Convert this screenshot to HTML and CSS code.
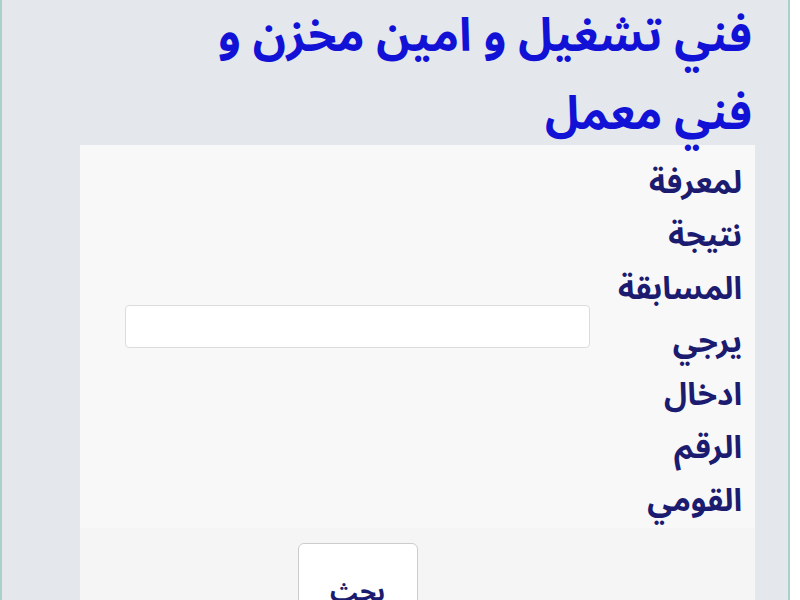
FILE: index.html
```html
<!DOCTYPE html>
<html lang="ar" dir="rtl">
<head>
<meta charset="utf-8">
<link rel="stylesheet" href="styles.css">
</head>
<body>
<div class="page">
  <h2 class="title">فني تشغيل و امين مخزن و<br>فني معمل</h2>
  <div class="panel">
    <div class="row">
      <div class="label">لمعرفة<br>نتيجة<br>المسابقة<br>يرجي<br>ادخال<br>الرقم<br>القومي</div>
      <div class="field"><input class="input" type="text"></div>
    </div>
    <div class="row row-btn">
      <div class="spacer"></div>
      <div class="field"><button class="btn">بحث</button></div>
    </div>
  </div>
</div>
</body>
</html>
```

FILE: styles.css
```css
html, body {
  margin: 0;
  padding: 0;
  background: #ffffff;
  height: 600px;
  overflow: hidden;
}
.page {
  width: 790px;
  height: 600px;
  margin: 0 10px 0 0;
  box-sizing: border-box;
  border-left: 2px solid #a9d0c9;
  border-right: 2px solid #a9d0c9;
  background: #e4e8ed;
  font-family: "Noto Sans Arabic", "DejaVu Sans", sans-serif;
  overflow: hidden;
}
.title {
  margin: 0;
  padding: 0 36px 0 0;
  color: #1212d6;
  font-size: 46px;
  font-weight: bold;
  line-height: 78px;
  margin-top: -2px;
  white-space: nowrap;
}
.panel {
  margin: -9px 33px 0 78px;
  background: #f8f8f9;
  height: 470px;
}
.row {
  display: grid;
  grid-template-columns: 120px 1fr;
}
.label {
  padding: 12px 13px 0 0;
  color: #1b1b6f;
  font-size: 31.5px;
  font-weight: bold;
  line-height: 53px;
  white-space: nowrap;
}
.field {
  display: flex;
  align-items: center;
  justify-content: center;
}
.input {
  width: 465px;
  height: 43px;
  box-sizing: border-box;
  border: 1px solid #dcdcdc;
  border-radius: 4px;
  background: #ffffff;
  margin-bottom: 20px;
}
.row-btn {
  background: #f5f5f6;
  padding-top: 15px;
  height: 100px;
}
.row-btn .field { align-items: flex-start; }
.btn {
  width: 120px;
  height: 72px;
  border: 1px solid #cccccc;
  border-radius: 6px;
  background: #ffffff;
  color: #1b1b6f;
  font-family: "Noto Sans Arabic", "DejaVu Sans", sans-serif;
  font-size: 26px;
  font-weight: bold;
  line-height: 30px;
  padding: 27px 0 0 0;
}
```
